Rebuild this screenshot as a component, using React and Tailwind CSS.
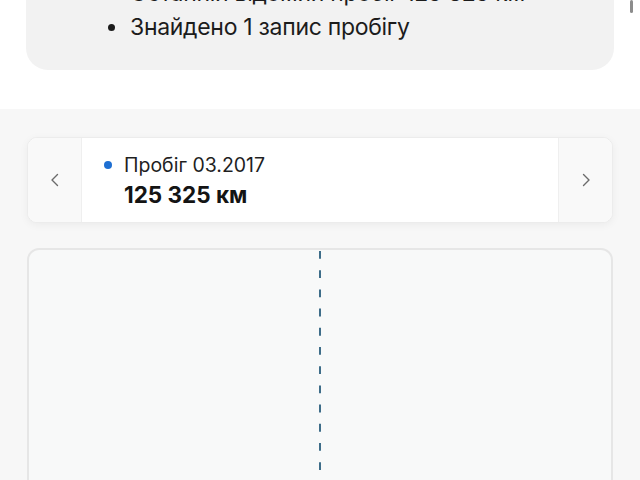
import React from 'react';

function Chevron({ dir }) {
  return (
    <svg className="w-4 h-4 text-[#6b6b6b]" fill="none" stroke="currentColor" viewBox="0 0 16 16">
      {dir === 'left' ? (
        <path strokeLinecap="round" strokeLinejoin="round" strokeWidth={1.4} d="M10.5 2.5L5 8l5.5 5.5" />
      ) : (
        <path strokeLinecap="round" strokeLinejoin="round" strokeWidth={1.4} d="M5.5 2.5L11 8l-5.5 5.5" />
      )}
    </svg>
  );
}

export default function App() {
  const summary = ['Останній відомий пробіг 125 325 км', 'Знайдено 1 запис пробігу'];

  return (
    <div className="relative w-[640px] h-[480px] overflow-hidden bg-white font-['Inter',sans-serif] text-[#1c1c1c]">
      {/* scroll indicator */}
      <div className="absolute right-[7px] top-0 w-[3px] h-[13px] rounded-full bg-[#8c8c8c]" />

      {/* Summary card */}
      <div className="px-[26px]">
        <div className="-mt-[30px] bg-[#f2f2f2] rounded-[22px] pl-[104px] pr-6 pt-[6px] pb-[26px]">
          <ul className="text-[23px] leading-[34px] tracking-[-0.3px] whitespace-nowrap">
            {summary.map((s, i) => (
              <li key={i} className="flex items-center gap-[15px]">
                <span className="w-[7px] h-[7px] rounded-full bg-[#1c1c1c] -ml-[22px]" />
                {s}
              </li>
            ))}
          </ul>
        </div>
      </div>

      {/* Mileage section */}
      <div className="mt-[39px] bg-[#f7f7f7] px-[27px] pt-[28px] h-[400px]">
        <div className="flex h-[86px] rounded-[10px] bg-white border border-[#ececec] shadow-[0_2px_8px_rgba(0,0,0,0.05)] overflow-hidden">
          <button className="w-[54px] flex items-center justify-center bg-[#f9f9f9] border-r border-[#efefef]">
            <Chevron dir="left" />
          </button>
          <div className="flex-1 flex flex-col justify-center pl-[22px]">
            <div className="flex items-center gap-[12px]">
              <span className="w-[8px] h-[8px] rounded-full bg-[#1e6fd2]" />
              <span className="text-[19.5px] leading-[22px] text-[#1f1f1f]">Пробіг 03.2017</span>
            </div>
            <div className="pl-[20px] mt-[7px] text-[22.5px] leading-[24px] font-bold text-[#141414]">125 325 км</div>
          </div>
          <button className="w-[54px] flex items-center justify-center bg-[#f9f9f9] border-l border-[#efefef]">
            <Chevron dir="right" />
          </button>
        </div>

        <div className="relative mt-[25px] h-[260px] rounded-[12px] border-2 border-[#e6e6e6] bg-[#f8f9f9]">
          <svg className="absolute left-[288px] top-0 w-[6px] h-full" viewBox="0 0 6 260" preserveAspectRatio="none">
            <line x1="3" y1="1" x2="3" y2="260" stroke="#3e6d89" strokeWidth="2" strokeDasharray="8 11.5" />
          </svg>
        </div>
      </div>
    </div>
  );
}
